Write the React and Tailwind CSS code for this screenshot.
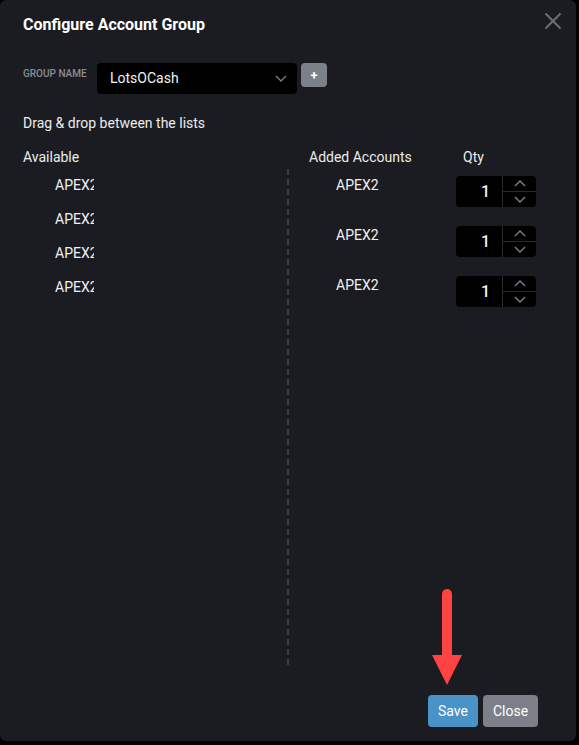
const available = ['APEX2', 'APEX2', 'APEX2', 'APEX2']
const added = [
    { name: 'APEX2', qty: 1 },
    { name: 'APEX2', qty: 1 },
    { name: 'APEX2', qty: 1 },
]

function Chevron({ up = false, className = '' }) {
    return (
        <svg width="12" height="7" viewBox="0 0 12 7" className={className}>
            <polyline
                points={up ? '1,6 6,1 11,6' : '1,1 6,6 11,1'}
                fill="none"
                stroke="currentColor"
                strokeWidth="1.4"
            />
        </svg>
    )
}

function QtyInput({ value }) {
    return (
        <div className="flex h-[31px] w-[80px] rounded-[4px] bg-black overflow-hidden">
            <div className="flex w-[47px] items-center justify-end pr-[12px] text-[16px] font-medium text-[#f2f2f2] border-r border-[#2a2b30]">
                {value}
            </div>
            <div className="flex flex-1 flex-col text-[#7f8288]">
                <div className="flex flex-1 items-center justify-center border-b border-[#2a2b30]">
                    <Chevron up />
                </div>
                <div className="flex flex-1 items-center justify-center">
                    <Chevron />
                </div>
            </div>
        </div>
    )
}

export default function App() {
    return (
        <div className="h-[745px] w-[579px] bg-black font-['Roboto',sans-serif]">
            <div className="relative flex h-[741px] w-[576px] flex-col rounded-[6px] bg-[#1b1c21] px-[23px] pt-[15px] pb-[14px]">
                {/* header */}
                <div className="flex items-center justify-between">
                    <h2 className="text-[16px] leading-[20px] font-bold text-white">Configure Account Group</h2>
                    <button className="mr-[-9px] mt-[-8px] text-[#6b6e74]">
                        <svg width="18" height="18" viewBox="0 0 18 18">
                            <path d="M1.5 1.5 L16.5 16.5 M16.5 1.5 L1.5 16.5" stroke="currentColor" strokeWidth="2" />
                        </svg>
                    </button>
                </div>

                {/* group name */}
                <div className="mt-[28px] flex items-start">
                    <label className="mt-[5px] w-[74px] text-[10px] leading-[12px] font-medium text-[#8a8d93]">GROUP NAME</label>
                    <div className="flex h-[31px] w-[200px] items-center justify-between rounded-[4px] bg-black pl-[13px] pr-[10px]">
                        <span className="text-[14px] text-[#f2f2f2]">LotsOCash</span>
                        <Chevron className="text-[#7a7d83]" />
                    </div>
                    <button className="ml-[4px] flex h-[24px] w-[26px] items-center justify-center rounded-[4px] bg-[#7c8088] text-[13px] font-bold leading-none text-white">
                        +
                    </button>
                </div>

                <p className="mt-[19px] text-[14px] leading-[20px] text-[#ececec]">Drag &amp; drop between the lists</p>

                {/* column headers */}
                <div className="mt-[14px] grid grid-cols-[264px_2px_1fr] text-[14px] leading-[20px] text-[#ececec]">
                    <span>Available</span>
                    <span />
                    <div className="flex pl-[20px]">
                        <span className="w-[154px]">Added Accounts</span>
                        <span>Qty</span>
                    </div>
                </div>

                {/* lists */}
                <div className="mt-[1px] grid h-[497px] grid-cols-[264px_2px_1fr]">
                    <div className="flex flex-col">
                        {available.map((a, i) => (
                            <div key={i} className="flex h-[34px] items-center pl-[32px] text-[14px] text-[#f2f2f2]">
                                <span className="w-[39px] overflow-hidden whitespace-nowrap">{a}</span>
                            </div>
                        ))}
                    </div>
                    <div className="mt-[1px] bg-[repeating-linear-gradient(to_bottom,#3b3d43_0_6px,transparent_6px_10px)]" />
                    <div className="flex flex-col pt-[7px] pl-[20px]">
                        {added.map((a, i) => (
                            <div key={i} className="flex h-[50px] items-start">
                                <span className="w-[147px] pl-[27px] text-[14px] leading-[20px] text-[#f2f2f2]">{a.name}</span>
                                <div className="mt-[1px]">
                                    <QtyInput value={a.qty} />
                                </div>
                            </div>
                        ))}
                    </div>
                </div>

                {/* footer */}
                <div className="mt-auto flex justify-end gap-[5px] pr-[15px]">
                    <button className="h-[32px] w-[50px] rounded-[4px] bg-[#4a93c9] text-[14px] text-white">Save</button>
                    <button className="h-[32px] w-[55px] rounded-[4px] bg-[#7d8088] text-[14px] text-white">Close</button>
                </div>

                {/* annotation arrow */}
                <svg className="absolute left-[432px] top-[588px]" width="31" height="98" viewBox="0 0 31 98">
                    <path d="M10 6 A5 5 0 0 1 20 6 L20 68 L10 68 Z" fill="#ff4242" />
                    <polygon points="0,67 30,67 15,97" fill="#ff4242" />
                </svg>
            </div>
        </div>
    )
}
